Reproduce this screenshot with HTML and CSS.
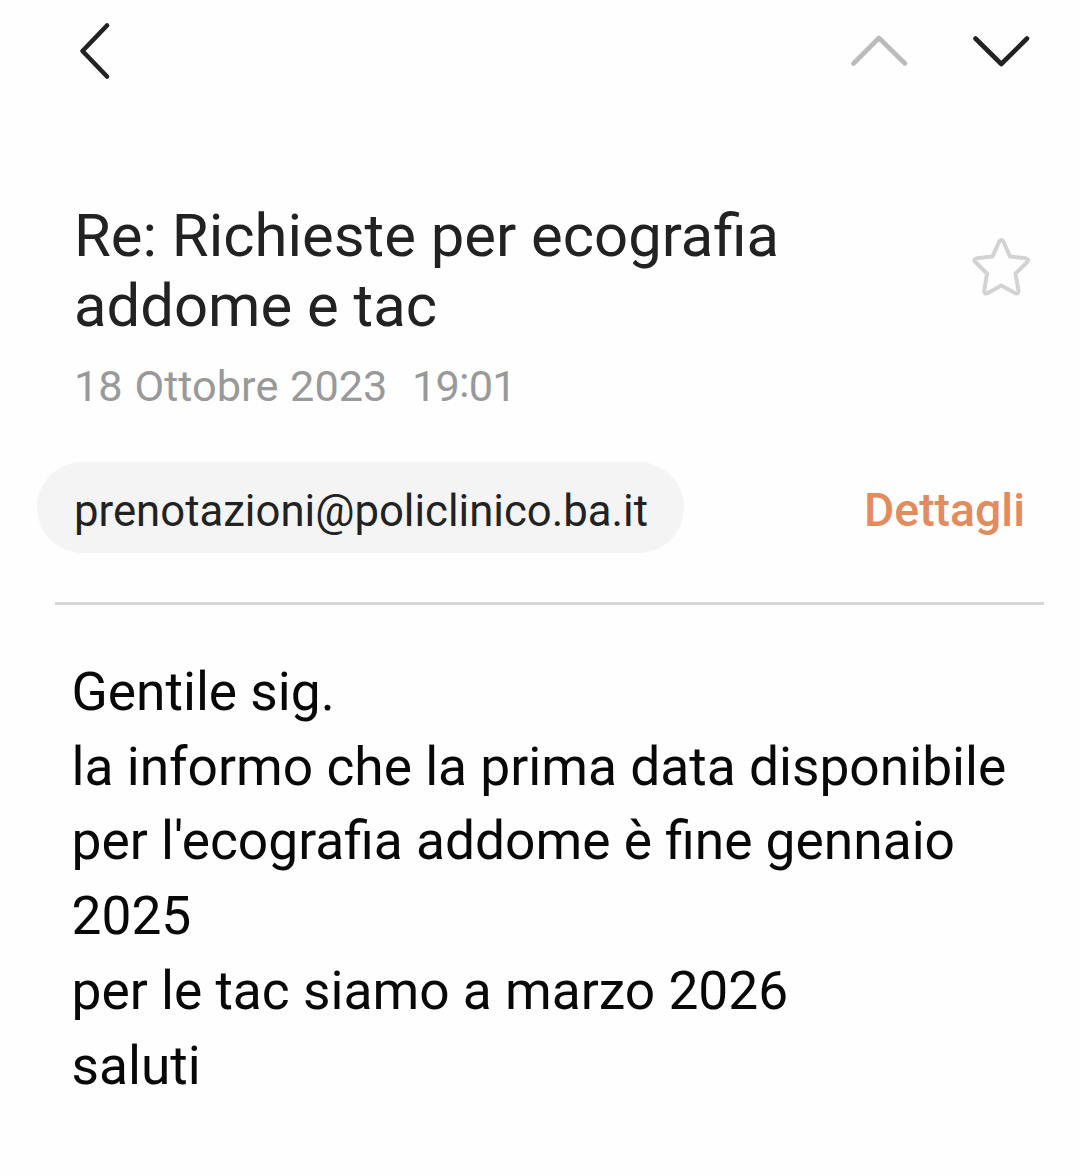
FILE: index.html
```html
<!DOCTYPE html>
<html lang="it">

<head>
    <meta charset="UTF-8">
    <meta name="viewport" content="width=device-width, initial-scale=1.0">
    <title>Re: Richieste per ecografia addome e tac</title>
    <link rel="stylesheet" href="styles.css">
</head>

<body>
    <header class="navbar">
        <svg class="icon back" viewBox="0 0 40 64">
            <path d="M32 6.500 L7.500 32 L32 57.500" />
        </svg>
        <div class="nav-right">
            <svg class="icon prev" viewBox="0 0 64 40">
                <path d="M6.500 32.500 L32 7 L58 32.500" />
            </svg>
            <svg class="icon next" viewBox="0 0 64 40">
                <path d="M6.500 7.500 L32.300 33 L58 7.500" />
            </svg>
        </div>
    </header>
    <section class="subject">
        <div>
            <h1>Re: Richieste per ecografia<br>addome e tac</h1>
            <div class="date">18 Ottobre 2023&nbsp; <span class="time">19<span class="colon">:</span>01</span></div>
        </div>
        <svg class="star" viewBox="0 0 64 64">
            <path d="M30.300 5.500 Q32.300 2.500 34.300 5.500 L41 20.500 L57 22.300 Q60.500 23.300 58 26.300 L46.500 37.500 L49.500 55 Q49.500 58.500 46.300 57.300 L32.300 49.500 L18.300 57.300 Q15.200 58.500 15.200 55 L18 37.500 L6.500 26.300 Q4 23.300 7.500 22.300 L23.500 20.500 Z" />
        </svg>
    </section>
    <section class="sender">
        <div class="address">prenotazioni@policlinico.ba.it</div>
        <div class="details">Dettagli</div>
    </section>
    <main class="message">
        <p>Gentile sig.</p>
        <p>la informo che la prima data disponibile</p>
        <p>per l'ecografia addome è fine gennaio</p>
        <p>2025</p>
        <p>per le tac siamo a marzo 2026</p>
        <p>saluti</p>
    </main>
</body>

</html>
```
FILE: styles.css
```css
* {
    box-sizing: border-box;
}

body {
    margin: 0;
    font-family: Roboto, sans-serif;
    background-color: #fefefe;
    color: #222;
    white-space: nowrap;
}

.navbar {
    height: 102px;
    padding: 0 47px 0 75px;
    display: flex;
    justify-content: space-between;
    align-items: center;
}

.nav-right {
    display: flex;
    gap: 58px;
}

.icon {
    display: block;
    fill: none;
    stroke: #222;
    stroke-width: 4.6;
    stroke-linecap: round;
    stroke-linejoin: round;
}

.back {
    width: 40px;
    height: 64px;
}

.prev,
.next {
    width: 64px;
    height: 40px;
}

.prev {
    stroke: #bbb;
}

.subject {
    display: flex;
    justify-content: space-between;
    height: 360px;
    padding: 99px 47px 0 74px;
}

h1 {
    margin: 0;
    font-size: 59.8px;
    font-weight: 400;
    line-height: 70px;
}

.date {
    margin-top: 20px;
    font-size: 43.3px;
    line-height: 52px;
    word-spacing: 1px;
    color: #999;
}

.time {
    margin-left: 1px;
    letter-spacing: -0.8px;
}

.colon {
    line-height: 0;
    vertical-align: 4px;
}

.star {
    width: 64px;
    height: 64px;
    margin-top: 35px;
    fill: none;
    stroke: #d3d3d3;
    stroke-width: 4;
    stroke-linejoin: round;
}

.sender {
    display: flex;
    justify-content: space-between;
    height: 91px;
    margin: 0 55px 0 37px;
}

.address {
    width: 647px;
    height: 91px;
    padding-left: 37px;
    border-radius: 46px;
    background-color: #f4f4f4;
    font-size: 43.7px;
    line-height: 99px;
}

.details {
    font-size: 46.4px;
    font-weight: 500;
    line-height: 96px;
    color: #e38b5e;
}

.message {
    margin: 49px 36px 0 55px;
    padding: 50px 0 0 16.5px;
    border-top: 3px solid #d5d5d5;
    font-size: 53.3px;
    line-height: 74.7px;
    color: #080808;
}

.message p {
    margin: 0;
}
```
